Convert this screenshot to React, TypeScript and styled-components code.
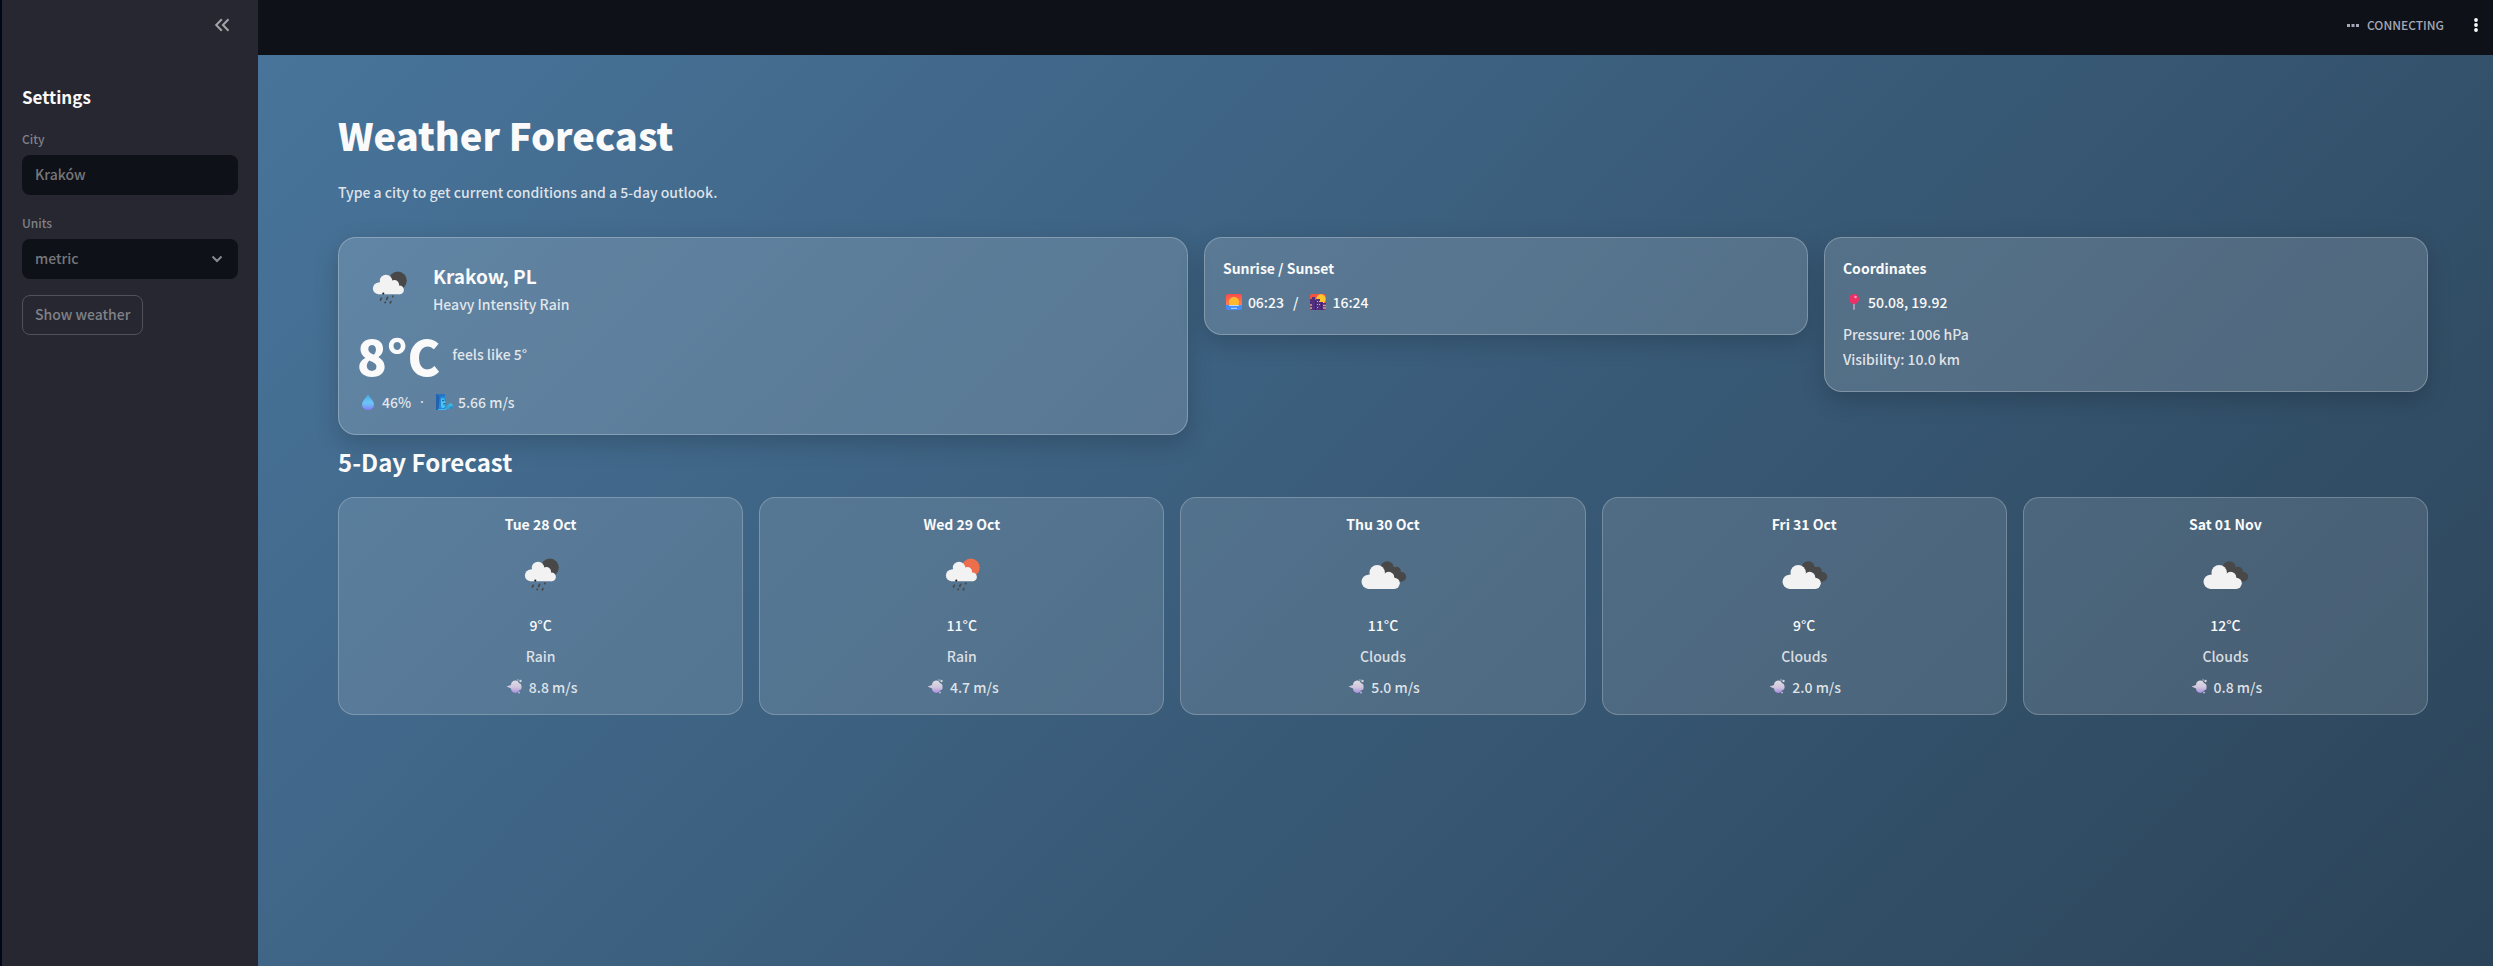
import React from "react";
import styled, { createGlobalStyle } from "styled-components";

const GlobalStyle = createGlobalStyle`
  *, *::before, *::after { box-sizing: border-box; }
  html, body { margin: 0; }
  body, input, select, button {
    font-family: "Source Sans Pro", "Noto Sans CJK SC", "Noto Sans", sans-serif;
    font-size: 14px;
    font-weight: 500;
    line-height: 26px;
    color: #fafafa;
  }
  h1, h2, h3, p, ul { margin: 0; padding: 0; }
`;

const Shell = styled.div`
  display: flex;
  min-height: 100vh;
  background: linear-gradient(135deg, #4b79a1, #283e51 110%);
`;

const Sidebar = styled.aside`
  flex: 0 0 258px;
  display: flex;
  flex-direction: column;
  padding: 0 20px;
  border-left: 2px solid #020817;
  background: #262730;
`;

const SidebarTop = styled.div`
  display: flex;
  justify-content: flex-end;
  height: 84px;
  padding: 13px 4px;
`;

const IconButton = styled.button`
  display: flex;
  align-items: center;
  justify-content: center;
  width: 24px;
  height: 24px;
  padding: 0;
  border: 0;
  background: none;
  color: ${(p) => p.color};
  cursor: pointer;
`;

const SidebarTitle = styled.h2`
  font-size: 17px;
  line-height: 26px;
  font-weight: 700;
`;

const SettingsForm = styled.form`
  display: flex;
  flex-direction: column;
  align-items: stretch;
  gap: 16px;
  padding-top: 17px;
`;

const Field = styled.div`
  display: flex;
  flex-direction: column;
  gap: 4px;
`;

const FieldLabel = styled.label`
  font-size: 12px;
  line-height: 24px;
  color: #808187;
`;

const TextInput = styled.input`
  width: 100%;
  height: 40px;
  padding: 0 13px 2px;
  border: 0;
  border-radius: 8px;
  background: #0e1117;
  color: #76777a;
`;

const SelectWrap = styled.div`
  position: relative;
  svg {
    position: absolute;
    right: 15px;
    top: 14px;
    pointer-events: none;
  }
`;

const Select = styled.select`
  appearance: none;
  display: block;
  width: 100%;
  height: 40px;
  padding: 0 13px 2px;
  border: 0;
  border-radius: 8px;
  background: #0e1117;
  color: #76777a;
`;

const SubmitButton = styled.button`
  align-self: flex-start;
  height: 40px;
  padding: 0 12px 2px;
  border: 1px solid #515159;
  border-radius: 8px;
  background: transparent;
  color: #808187;
  cursor: pointer;
`;

const Main = styled.div`
  flex: 1;
  min-width: 0;
`;

const Header = styled.header`
  display: flex;
  align-items: center;
  justify-content: flex-end;
  height: 55px;
  padding: 0 5px 5px;
  background: #0e1117;
`;

const Status = styled.div`
  display: flex;
  align-items: center;
  gap: 8px;
  margin-right: 20px;
  font-size: 12px;
  line-height: 24px;
  color: #a3a8b8;
`;

const Content = styled.main`
  padding: 53px 65px 80px 80px;
`;

const PageTitle = styled.h1`
  font-size: 38px;
  line-height: 54px;
  font-weight: 900;
`;

const Lead = styled.p`
  margin: 17px 0 32px;
  color: rgba(250, 250, 250, 0.85);
`;

const SummaryRow = styled.section`
  display: grid;
  grid-template-columns: 1.407fr 1fr 1fr;
  align-items: start;
  gap: 16px;
`;

const Card = styled.article`
  min-width: 0;
  padding: 18px 18px 19px;
  border: 1px solid rgba(255, 255, 255, 0.25);
  border-radius: 18px;
  background: rgba(255, 255, 255, 0.15);
  box-shadow: 0 8px 24px rgba(0, 0, 0, 0.18);
`;

const CardTitle = styled.h3`
  margin-bottom: 9px;
  font-size: 14px;
  line-height: 24px;
  font-weight: 700;
`;

const Place = styled.div`
  display: flex;
  align-items: center;
  gap: 12px;
`;

const PlaceIcon = styled.div`
  display: flex;
  align-items: center;
  justify-content: center;
  width: 64px;
  height: 64px;
`;

const PlaceName = styled.h2`
  font-size: 19px;
  line-height: 33px;
  font-weight: 700;
`;

const Muted = styled.p`
  line-height: 25px;
  color: rgba(250, 250, 250, 0.85);
`;

const Temperature = styled.div`
  display: flex;
  align-items: center;
  gap: 12px;
  height: 69px;
`;

const Degrees = styled.strong`
  font-size: 49px;
  line-height: 70px;
  font-weight: 900;
`;

const IconLine = styled.p<{ $muted?: boolean }>`
  display: flex;
  align-items: center;
  gap: 3px;
  line-height: 26px;
  color: rgba(250, 250, 250, ${(p) => (p.$muted ? 0.85 : 1)});
  svg { flex: none; }
`;

const Separator = styled.span`
  padding: 0 6px;
`;

const DotSeparator = styled(Separator)`
  font-family: "Noto Sans", sans-serif;
`;

const Details = styled.div`
  padding-top: 7px;
`;

const SectionTitle = styled.h2`
  padding: 9px 0 17px;
  font-size: 24px;
  line-height: 36px;
  font-weight: 700;
`;

const ForecastRow = styled.ul`
  display: grid;
  grid-template-columns: repeat(5, 1fr);
  gap: 16px;
  list-style: none;
`;

const DayCard = styled.li`
  display: flex;
  flex-direction: column;
  align-items: center;
  gap: 5px;
  padding: 13px 18px 14px;
  border: 1px solid rgba(255, 255, 255, 0.22);
  border-radius: 16px;
  background: rgba(255, 255, 255, 0.12);
`;

const DayName = styled.h3`
  font-size: 14px;
  line-height: 26px;
  font-weight: 700;
`;

const DayIcon = styled.div`
  display: flex;
  padding: 8px 0 7px;
`;

const DayText = styled.p<{ $muted?: boolean }>`
  line-height: 26px;
  color: rgba(250, 250, 250, ${(p) => (p.$muted ? 0.82 : 1)});
`;

function RainIcon({ disc }: { disc: string }) {
  return (
    <svg width="50" height="50" viewBox="0 0 50 50" aria-hidden="true">
      <circle cx="33.8" cy="17.6" r="9" fill={disc} />
      <g fill="#f2f2f2">
        <circle cx="14.7" cy="25.4" r="5.8" />
        <circle cx="22" cy="18" r="6.2" />
        <circle cx="30.4" cy="21.8" r="4.7" />
        <circle cx="35.5" cy="26.9" r="4.4" />
        <path d="M14 20L22 17L31 20L35.5 26V31.3H14.5Z" />
      </g>
      <circle cx="19.3" cy="30.6" r="1.1" fill="#222" />
      <g stroke="#48484a" strokeWidth="1.7" strokeLinecap="round">
        <path d="M17.3 35.2l-.8 1.8M23.6 34.4l-.9 2M28.9 33.1l-.2 .5M21.3 39.2l-.2 .4M26.9 38.6l-.6 1.2" />
      </g>
    </svg>
  );
}

function CloudsIcon() {
  return (
    <svg width="50" height="50" viewBox="0 0 50 50" aria-hidden="true">
      <g fill="#484848">
        <circle cx="29.2" cy="18" r="6.7" />
        <circle cx="38.3" cy="21.3" r="4.6" />
        <circle cx="43.5" cy="26.8" r="4.7" />
        <path d="M29 14L38 18L44 25V31.5H30Z" />
      </g>
      <g fill="#f2f2f2">
        <circle cx="10.6" cy="31.8" r="7.1" />
        <circle cx="19.2" cy="22.8" r="7.7" />
        <circle cx="30.6" cy="27.5" r="5.7" />
        <circle cx="36.2" cy="33.3" r="5.6" />
        <path d="M10 25L19 22L31 25L36 32V38.9H10.6Z" />
      </g>
    </svg>
  );
}

function DropIcon() {
  return (
    <svg width="22" height="18" viewBox="0 0 22 18" aria-hidden="true">
      <defs>
        <linearGradient id="drop" x1="0" y1="0" x2="0" y2="1">
          <stop offset="0" stopColor="#3fa4de" />
          <stop offset=".5" stopColor="#6cc6f8" />
          <stop offset=".7" stopColor="#70b4f8" />
          <stop offset="1" stopColor="#857af5" />
        </linearGradient>
      </defs>
      <path d="M11 1C12.2 4 17 8 17 11.5A6 5.5 0 0 1 5 11.5C5 8 9.800 4 11 1Z" fill="url(#drop)" />
    </svg>
  );
}

function WindFaceIcon() {
  return (
    <svg width="22" height="18" viewBox="0 0 22 18" aria-hidden="true">
      <path d="M3 1H12V5L13 8L12 10V17H3Z" fill="#2489d8" />
      <path d="M3 1H7L5.500 17H3Z" fill="#2461ae" />
      <path d="M8 5.500H11.500V8L13 9.500L11.500 11L12 14C10 16 8 15.500 8 13Z" fill="#48c4f4" />
      <path d="M3 1H12V3L7 4Z" fill="#2672c5" />
      <circle cx="10" cy="7.500" r=".8" fill="#174776" />
      <path d="M10 11L12.500 10.500" stroke="#1c5f96" strokeWidth="1" />
      <circle cx="15" cy="14" r="2" fill="#31a5df" />
      <circle cx="17.500" cy="12.500" r="2.200" fill="#35b7eb" />
      <circle cx="18" cy="14.500" r="1.500" fill="#278fc9" />
      <path d="M5 16.500H12L14 15.500" stroke="#3db9ed" strokeWidth="1.200" fill="none" />
    </svg>
  );
}

function SunriseIcon() {
  return (
    <svg width="22" height="18" viewBox="0 0 22 18" aria-hidden="true">
      <defs>
        <linearGradient id="dawn" x1="0" y1="0" x2="0" y2="1">
          <stop offset="0" stopColor="#fa4b4b" />
          <stop offset="1" stopColor="#ff8049" />
        </linearGradient>
      </defs>
      <path d="M5 1H17Q19 1 19 3V12H3V3Q3 1 5 1Z" fill="url(#dawn)" />
      <path d="M3 12H19V15Q19 17 17 17H5Q3 17 3 15Z" fill="#478cf6" />
      <path d="M7 12A5 5 0 1 1 15 12Z" fill="#fdb92f" />
      <path d="M6 12.500H16M8 15.300H14" stroke="#b7dcff" strokeWidth="1" />
    </svg>
  );
}

function SunsetIcon() {
  return (
    <svg width="22" height="18" viewBox="0 0 22 18" aria-hidden="true">
      <rect x="3" y="1" width="16" height="16" rx="2" fill="#f4533f" />
      <circle cx="14" cy="6" r="4.700" fill="#ffc52f" />
      <path d="M3 6H5V4H8V9H9V6H13V9H16V10H19V15Q19 17 17 17H5Q3 17 3 15Z" fill="#53307e" />
      <path d="M8 7H9V17H8ZM14 9H15V17H14Z" fill="#3e2467" />
      <path d="M3 12H5M3 15H5M16 12.500H19M16 15H19" stroke="#d8a18b" strokeWidth="1.300" />
      <path d="M10.500 8v1M12.500 8v1M10.500 11v1M12.500 11v1M10.500 14v1" stroke="#dda0c8" strokeWidth="1" />
    </svg>
  );
}

function PinIcon() {
  return (
    <svg width="22" height="18" viewBox="0 0 22 18" aria-hidden="true">
      <rect x="10" y="9" width="2" height="8" rx="1" fill="#a99bb4" />
      <circle cx="11" cy="6" r="5" fill="#ee2f65" />
      <circle cx="12.500" cy="4" r="1.300" fill="#ff9bb7" />
    </svg>
  );
}

function PuffIcon() {
  return (
    <svg width="22" height="18" viewBox="0 0 22 18" aria-hidden="true">
      <defs>
        <linearGradient id="puff" x1="0" y1="0" x2="0" y2="1">
          <stop offset="0" stopColor="#dedce3" />
          <stop offset=".55" stopColor="#d0c6dd" />
          <stop offset="1" stopColor="#a98ee0" />
        </linearGradient>
      </defs>
      <path d="M2.500 8.500L7 7Q7 3 11 2.500Q14 2 15 5Q18 6 17.500 9Q18 12 15 12.500Q13 16 9.500 14.500Q7 13.500 7 10.500Z" fill="url(#puff)" />
      <circle cx="16.500" cy="3" r="1.200" fill="#d5d4df" />
      <circle cx="14" cy="2" r=".7" fill="#d5d4df" />
      <circle cx="15" cy="14.500" r=".9" fill="#c9bce5" />
    </svg>
  );
}

const days = [
  { date: "Tue 28 Oct", icon: <RainIcon disc="#484848" />, temp: "9°C", sky: "Rain", wind: "8.8 m/s" },
  { date: "Wed 29 Oct", icon: <RainIcon disc="#ec6e4c" />, temp: "11°C", sky: "Rain", wind: "4.7 m/s" },
  { date: "Thu 30 Oct", icon: <CloudsIcon />, temp: "11°C", sky: "Clouds", wind: "5.0 m/s" },
  { date: "Fri 31 Oct", icon: <CloudsIcon />, temp: "9°C", sky: "Clouds", wind: "2.0 m/s" },
  { date: "Sat 01 Nov", icon: <CloudsIcon />, temp: "12°C", sky: "Clouds", wind: "0.8 m/s" },
];

export default function App() {
  return (
    <>
      <GlobalStyle />
      <Shell>
        <Sidebar>
          <SidebarTop>
            <IconButton type="button" color="#a3a3a8" aria-label="Collapse sidebar">
              <svg width="16" height="14" viewBox="0 0 16 14" fill="none" stroke="currentColor" strokeWidth="2">
                <path d="M7.800 1.200L2.200 7L7.800 12.800M14.500 1.200L8.900 7L14.500 12.800" />
              </svg>
            </IconButton>
          </SidebarTop>
          <SidebarTitle>Settings</SidebarTitle>
          <SettingsForm onSubmit={(e) => e.preventDefault()}>
            <Field>
              <FieldLabel htmlFor="city">City</FieldLabel>
              <TextInput id="city" defaultValue="Kraków" />
            </Field>
            <Field>
              <FieldLabel htmlFor="units">Units</FieldLabel>
              <SelectWrap>
                <Select id="units" defaultValue="metric">
                  <option value="metric">metric</option>
                  <option value="imperial">imperial</option>
                </Select>
                <svg width="12" height="12" viewBox="0 0 12 12" fill="none" stroke="#8a8b90" strokeWidth="2">
                  <path d="M1.500 3.500L6 8L10.500 3.500" />
                </svg>
              </SelectWrap>
            </Field>
            <SubmitButton type="submit">Show weather</SubmitButton>
          </SettingsForm>
        </Sidebar>
        <Main>
          <Header>
            <Status role="status">
              <svg width="12" height="3" viewBox="0 0 12 3" fill="#a3a8b8" aria-hidden="true">
                <path d="M0 0h3v3H0zM4.500 0h3v3h-3zM9 0h3v3H9z" />
              </svg>
              CONNECTING
            </Status>
            <IconButton type="button" color="#fafafa" aria-label="Main menu">
              <svg width="4" height="14" viewBox="0 0 4 14" fill="currentColor">
                <circle cx="2" cy="2" r="1.900" />
                <circle cx="2" cy="7" r="1.900" />
                <circle cx="2" cy="12" r="1.900" />
              </svg>
            </IconButton>
          </Header>
          <Content>
            <PageTitle>Weather Forecast</PageTitle>
            <Lead>Type a city to get current conditions and a 5-day outlook.</Lead>
            <SummaryRow>
              <Card>
                <Place>
                  <PlaceIcon>
                    <RainIcon disc="#484848" />
                  </PlaceIcon>
                  <div>
                    <PlaceName>Krakow, PL</PlaceName>
                    <Muted>Heavy Intensity Rain</Muted>
                  </div>
                </Place>
                <Temperature>
                  <Degrees>8°C</Degrees>
                  <Muted>feels like 5°</Muted>
                </Temperature>
                <IconLine $muted>
                  <DropIcon />
                  <span>46%</span>
                  <DotSeparator>·</DotSeparator>
                  <WindFaceIcon />
                  <span>5.66 m/s</span>
                </IconLine>
              </Card>
              <Card>
                <CardTitle>Sunrise / Sunset</CardTitle>
                <IconLine>
                  <SunriseIcon />
                  <span>06:23</span>
                  <Separator>/</Separator>
                  <SunsetIcon />
                  <span>16:24</span>
                </IconLine>
              </Card>
              <Card>
                <CardTitle>Coordinates</CardTitle>
                <IconLine>
                  <PinIcon />
                  <span>50.08, 19.92</span>
                </IconLine>
                <Details>
                  <Muted>Pressure: 1006 hPa</Muted>
                  <Muted>Visibility: 10.0 km</Muted>
                </Details>
              </Card>
            </SummaryRow>
            <SectionTitle>5-Day Forecast</SectionTitle>
            <ForecastRow>
              {days.map((d) => (
                <DayCard key={d.date}>
                  <DayName>{d.date}</DayName>
                  <DayIcon>{d.icon}</DayIcon>
                  <DayText>{d.temp}</DayText>
                  <DayText $muted>{d.sky}</DayText>
                  <IconLine $muted>
                    <PuffIcon />
                    <span>{d.wind}</span>
                  </IconLine>
                </DayCard>
              ))}
            </ForecastRow>
          </Content>
        </Main>
      </Shell>
    </>
  );
}
